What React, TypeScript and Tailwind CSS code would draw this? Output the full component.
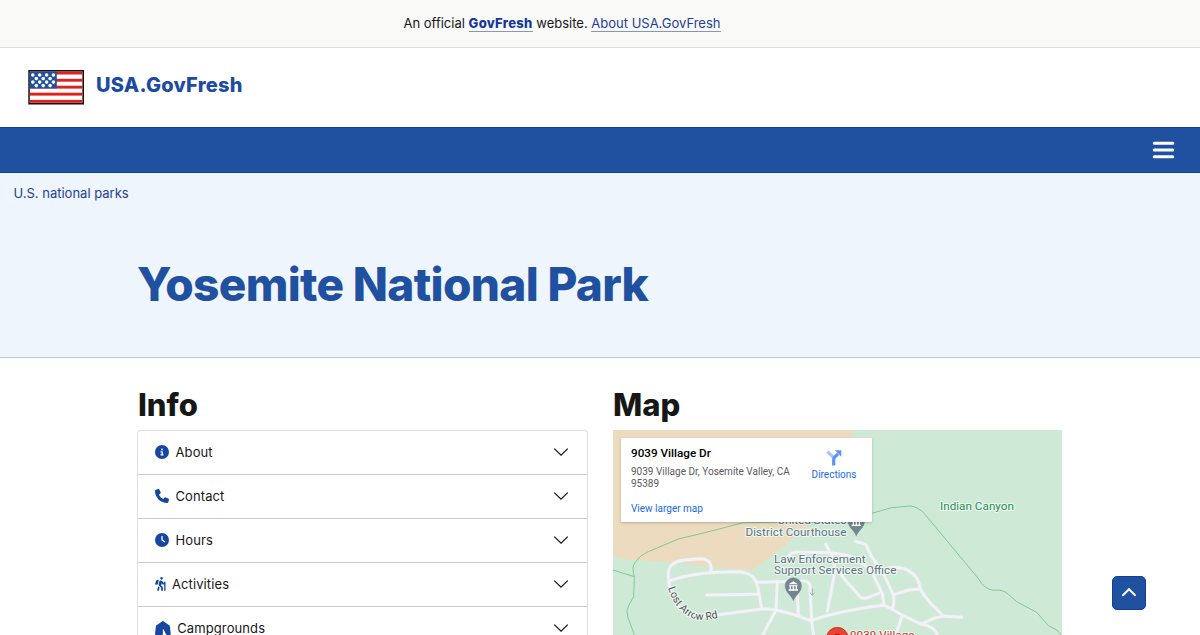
import type { ReactNode } from "react";
import { FaCircleInfo, FaPhone, FaClock, FaPersonHiking, FaTent } from "react-icons/fa6";

const starRows = [
  { y: 5, xs: [4.8, 11.7, 18.6, 25.4] },
  { y: 8.6, xs: [8.3, 15.2, 22.1] },
  { y: 12.1, xs: [4.8, 11.7, 18.6, 25.4] },
  { y: 15.6, xs: [8.3, 15.2, 22.1] },
];

function Flag() {
  return (
    <svg width="56" height="35" viewBox="0 0 56 35" className="block shrink-0">
      <rect x="0.3" y="0" width="55.7" height="34.5" fill="#111" />
      <rect x="1.8" y="1.6" width="52.6" height="31.3" fill="#fff" />
      {[1.6, 8.8, 15.7, 22.7, 29.9].map((y) => (
        <rect key={y} x="1.8" y={y} width="52.6" height="2.9" fill="#e0201b" />
      ))}
      <rect x="1.8" y="1.6" width="27" height="16.8" fill="#1f51a0" />
      {starRows.map((row) =>
        row.xs.map((x) => <circle key={`${x}-${row.y}`} cx={x} cy={row.y} r="1.8" fill="#fff" />),
      )}
    </svg>
  );
}

const sections: { label: string; icon: ReactNode }[] = [
  { label: "About", icon: <FaCircleInfo className="h-3.5 w-3.5" /> },
  { label: "Contact", icon: <FaPhone className="h-3.5 w-3.5" /> },
  { label: "Hours", icon: <FaClock className="h-3.5 w-3.5" /> },
  { label: "Activities", icon: <FaPersonHiking className="h-3.5 w-[10.5px]" /> },
  { label: "Campgrounds", icon: <FaTent className="h-3.5 w-[15.75px]" /> },
];

function InfoList() {
  return (
    <div className="h-60 rounded-t border border-[#dfdfdf] border-b-0">
      {sections.map((s) => (
        <div key={s.label} className="flex h-11 items-center border-b border-[#cbcbcb] pr-[18px] pb-px pl-[17px]">
          <span className="text-[#1646a0]">{s.icon}</span>
          <span className="ml-[6.5px] pt-px text-[13px] tracking-[0.1px]">{s.label}</span>
          <svg width="16" height="10" viewBox="0 0 16 10" fill="none" className="ml-auto">
            <path d="M1.3 1.6 L8 8.1 L14.7 1.6" stroke="#171717" strokeWidth="1.3" />
          </svg>
        </div>
      ))}
    </div>
  );
}

const roads = [
  "M192,472 C184,430 195,414 232,406 L285,401 C312,402 320,415 318,438",
  "M195,467 C240,450 300,440 400,440 C440,442 455,460 461,500 L470,549",
  "M192,470 C195,520 225,565 270,575 L340,569 L480,551 C520,553 560,565 617,587",
  "M305,510 L460,508",
  "M455,472 L590,468 Q611,467 615,480 L620,590 L627,640",
  "M517,470 L513,555 L468,640",
  "M552,392 Q560,380 580,381 L675,383 L735,392 Q790,425 800,440 L832,505 L837,541",
  "M662,357 L682,395 Q695,430 684,470 L667,559",
  "M577,500 L580,572",
  "M617,587 C670,570 750,550 835,541",
  "M835,541 C855,545 890,575 950,597 C980,605 990,610 1003,640",
  "M750,349 L782,358 L800,395 L840,455 L865,510 Q870,530 862,552",
  "M695,435 L765,515 Q775,524 790,517 L822,505",
  "M845,430 C895,420 940,440 945,490 C965,530 985,540 1015,573",
  "M870,508 L910,495 L945,492",
  "M1070,577 L1015,573 Q980,580 950,597",
  "M890,577 L875,620",
];

function PlacePin({ x, y }: { x: number; y: number }) {
  return (
    <g transform={`translate(${x} ${y})`}>
      <path d="M0,45 C-5,25 -26,18 -26,-3 A26,26 0 1 1 26,-3 C26,18 5,25 0,45 Z" fill="#71868f" stroke="#e4efe8" strokeWidth="1.5" />
      <path d="M-14,-8 L0,-17 L14,-8 Z M-13,-5 H13 V-2 H-13 Z M-11,-2 H-7 V7 H-11 Z M-2,-2 H2 V7 H-2 Z M7,-2 H11 V7 H7 Z M-14,7 H14 V11 H-14 Z" fill="#fff" />
    </g>
  );
}

function MapArt() {
  return (
    <svg width="449" height="205" viewBox="0 0 449 205" className="block font-['Roboto',sans-serif]">
      <rect width="449" height="205" fill="#ceead6" />
      <g transform="translate(-8 -5) scale(0.33333)" fill="none" strokeLinecap="round" strokeLinejoin="round">
        <path d="M24,15 H748 L735,60 L600,310 L555,348 L445,435 L320,427 L180,411 L50,402 L24,390 Z" fill="#eddbbf" />
        <g stroke="#83c793" strokeWidth="3">
          <path d="M92,640 L68,575 Q62,555 72,540 L86,515 L88,455 Q78,425 92,410 Q105,390 130,380 L220,342 L300,323 L415,293 L700,290 L800,265 L860,248 L915,243 Q940,245 960,268 L1122,463 Q1135,490 1165,496 Q1195,492 1210,508 L1235,530 L1295,562 L1330,602 L1355,615 L1374,636" />
          <path d="M24,435 L88,455" />
        </g>
        <g stroke="#dbe2e4" strokeWidth="12.5">
          {roads.map((d) => <path key={d} d={d} />)}
        </g>
        <g stroke="#f1f3f5" strokeWidth="9">
          {roads.map((d) => <path key={d} d={d} />)}
        </g>
        <path d="M622,492 V510 M616,504 L622,511 L628,504" stroke="#a3adb3" strokeWidth="3" />
        <PlacePin x={754} y={292} />
        <PlacePin x={565} y={486} />
        <path d="M664,640 A33,33 0 1 1 730,640 Z" fill="#ea4335" stroke="#b3261e" strokeWidth="2" />
        <circle cx="697" cy="637" r="11" fill="#a11d16" />
      </g>
      <g fontSize="11.75" fill="#5b737c" stroke="#eef6f1" strokeWidth="2.2" strokeLinejoin="round" paintOrder="stroke">
        <text x="164.5" y="94" textLength="69">United States</text>
        <text x="132.5" y="105.5" textLength="101">District Courthouse</text>
        <text x="161" y="132.7" textLength="91.5">Law Enforcement</text>
        <text x="161" y="144.2" textLength="122.5">Support Services Office</text>
        <text x="327" y="80" textLength="74" fill="#1e8e4e">Indian Canyon</text>
        <text x="237" y="208.5" textLength="64.5" fill="#c5372c">9039 Village</text>
        <path id="lost-arrow" d="M55,158 C61,177 72,187 84,189.5 Q94,191 108,187" fill="none" stroke="none" />
        <text fontSize="10.6" fill="#4d5156">
          <textPath href="#lost-arrow">Lost Arrow Rd</textPath>
        </text>
      </g>
    </svg>
  );
}

function PlaceCard() {
  return (
    <div className="absolute top-2 left-2 flex h-[84px] w-[251px] justify-between rounded-[1px] bg-white pt-2 pr-[15.5px] pl-2.5 font-['Roboto',sans-serif] text-[10px] shadow-[0_1px_3px_rgba(0,0,0,0.22)]">
      <div>
        <p className="text-[11.7px] leading-[14px] font-medium text-black">9039 Village Dr</p>
        <p className="mt-1.5 w-[162px] leading-3 text-[#5b5b5b]">9039 Village Dr, Yosemite Valley, CA 95389</p>
        <p className="mt-[13px] leading-3 text-[#1a6ae8]">View larger map</p>
      </div>
      <div className="flex flex-col items-center pt-[3px]">
        <svg width="18" height="17" viewBox="0 0 18 17" fill="none">
          <path d="M2.4 2.6 L8.4 8.4" stroke="#a9c5fa" strokeWidth="3.2" />
          <path d="M8.7 16.5 V10.5 Q8.7 8.9 10 7.8 L13 4.9" stroke="#5d93f5" strokeWidth="3.2" />
          <path d="M9.8 1.3 H16.3 V7.8 Z" fill="#5d93f5" />
        </svg>
        <p className="mt-[3px] leading-3 text-[#1a6ae8]">Directions</p>
      </div>
    </div>
  );
}

export default function App() {
  return (
    <div className="relative h-[635px] overflow-hidden bg-white font-['Inter',sans-serif] text-[#171717]">
      <div className="flex h-12 justify-center border-b border-[#dddddb] bg-[#f9f9f7] pt-4 pr-[76px] text-[13px] leading-[15px]">
        <p className="whitespace-pre">
          An official{" "}
          <a className="inline-block border-b border-[#8393cb] font-extrabold tracking-[0.3px] text-[#14379b]">GovFresh</a>
          {" website. "}
          <a className="inline-block border-b border-[#8393cb] text-[#1f4099]">About USA.GovFresh</a>
        </p>
      </div>

      <header className="flex h-[79px] items-start gap-3 pt-[22px] pl-7">
        <Flag />
        <span className="pt-[3px] text-[20px] leading-6 font-extrabold tracking-[0.25px] text-[#1c4ba3]">USA.GovFresh</span>
      </header>

      <nav className="flex h-[46px] items-center justify-end border-y border-[#103f98] bg-[#1f51a0] pr-[25px]">
        <svg width="23" height="20" viewBox="0 0 23 20" stroke="#fff" strokeWidth="3" strokeLinecap="round">
          <path d="M2.2 3.3 H20.8 M2.2 10 H20.8 M2.2 16.7 H20.8" />
        </svg>
      </nav>

      <section className="h-[185px] border-b border-[#b2cbe3] bg-[#eef5fc]">
        <p className="pt-3 pl-[13.5px] text-[13px] leading-4 text-[#1f4099]">U.S. national parks</p>
        <h1 className="pt-14 pl-[137px] text-[46px] leading-[54px] font-extrabold tracking-[-0.68px] text-[#1f51a0]">
          Yosemite National Park
        </h1>
      </section>

      <main className="flex gap-[25px] pt-[29px] pl-[137px]">
        <section className="w-[451px]">
          <h2 className="h-[43px] pl-px text-[31px] leading-9 font-extrabold">Info</h2>
          <InfoList />
        </section>
        <section className="w-[449px]">
          <h2 className="h-[43px] text-[31px] leading-9 font-extrabold">Map</h2>
          <div className="relative">
            <MapArt />
            <PlaceCard />
          </div>
        </section>
      </main>

      <button className="absolute top-[576px] left-[1112px] flex h-[34px] w-[34px] items-center justify-center rounded-[5px] border border-[#103f98] bg-[#1f51a0]">
        <svg width="16" height="10" viewBox="0 0 16 10" fill="none" className="mb-0.5">
          <path d="M2 8.2 L8 2.2 L14 8.2" stroke="#fff" strokeWidth="2" strokeLinecap="round" />
        </svg>
      </button>
    </div>
  );
}
